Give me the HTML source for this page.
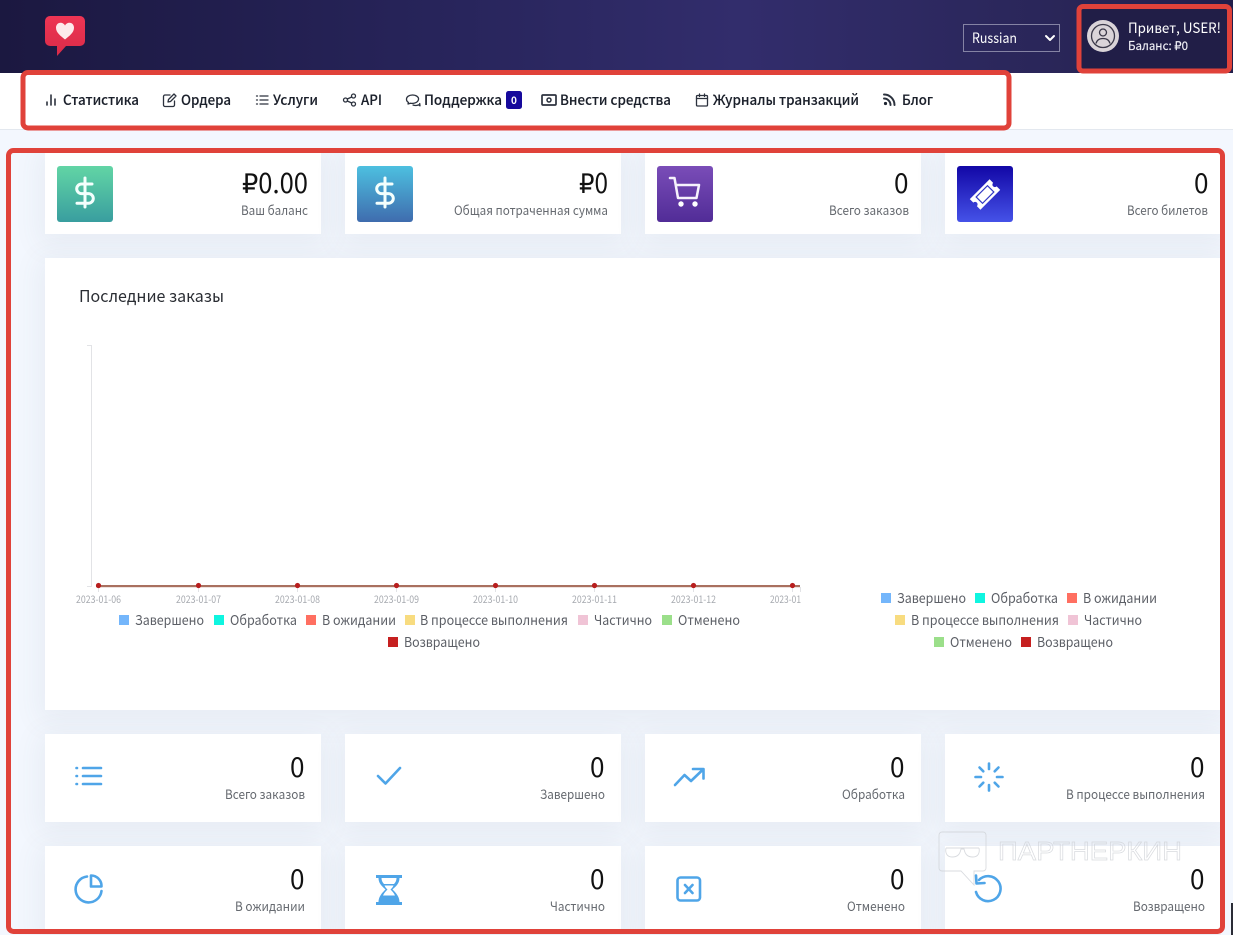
<!DOCTYPE html>
<html lang="ru">
<head>
<meta charset="utf-8">
<title>Панель</title>
<style>
html,body{margin:0;padding:0;width:1233px;height:935px;overflow:hidden;background:#f3f7fe}
body{position:relative;font-family:"Liberation Sans","Noto Sans CJK JP",sans-serif}
.h{position:absolute;left:0;top:0;width:1233px;height:73px;background:linear-gradient(90deg,#1b1840 0%,#27245a 35%,#322d6c 60%,#2a2659 85%,#211e4b 100%)}
.n{position:absolute;left:0;top:73px;width:1233px;height:56px;background:#fff;border-bottom:1px solid #e3e8ef}
.c{position:absolute;background:#fff;box-shadow:0 6px 26px 6px rgba(70,90,100,.065)}
.clip{position:absolute;left:0;top:150px;width:1221px;height:785px;overflow:hidden}
svg{position:absolute;left:0;top:0}
text{font-family:"Noto Sans CJK JP","Noto Sans CJK SC",sans-serif}
.nav{font-size:14px;font-weight:500;fill:#1a1f2a;stroke:#1a1f2a;stroke-width:.12}
.ni{fill:none;stroke:#2c323e;stroke-width:1.300;stroke-linecap:round;stroke-linejoin:round}
.v{font-size:27px;fill:#111}
.l{font-size:13px;fill:#666a70}
.lg{font-size:13.5px;fill:#5c5f66}
.d{font-size:10px;fill:#a6a9af}
.bi{fill:none;stroke:#4fa5e8;stroke-width:2.600;stroke-linecap:round;stroke-linejoin:round}
</style>
</head>
<body>
<div class="h"></div>
<div class="n"></div>
<div class="clip">
<div class="c" style="left:45px;top:0;width:276px;height:84px"></div>
<div class="c" style="left:345px;top:0;width:276px;height:84px"></div>
<div class="c" style="left:645px;top:0;width:276px;height:84px"></div>
<div class="c" style="left:945px;top:0;width:276px;height:84px"></div>
<div class="c" style="left:45px;top:108px;width:1176px;height:452px"></div>
<div class="c" style="left:45px;top:584px;width:276px;height:88px"></div>
<div class="c" style="left:345px;top:584px;width:276px;height:88px"></div>
<div class="c" style="left:645px;top:584px;width:276px;height:88px"></div>
<div class="c" style="left:945px;top:584px;width:276px;height:88px"></div>
<div class="c" style="left:45px;top:696px;width:276px;height:88px"></div>
<div class="c" style="left:345px;top:696px;width:276px;height:88px"></div>
<div class="c" style="left:645px;top:696px;width:276px;height:88px"></div>
<div class="c" style="left:945px;top:696px;width:276px;height:88px"></div>
</div>
<svg width="1233" height="935" viewBox="0 0 1233 935">
<defs>
<linearGradient id="g1" x1="0" y1="0" x2="0" y2="1"><stop offset="0" stop-color="#62d5a5"/><stop offset="1" stop-color="#399e9f"/></linearGradient>
<linearGradient id="g2" x1="0" y1="0" x2="0" y2="1"><stop offset="0" stop-color="#4dc0e0"/><stop offset="1" stop-color="#3f6cae"/></linearGradient>
<linearGradient id="g3" x1="0" y1="0" x2="0" y2="1"><stop offset="0" stop-color="#7a4db8"/><stop offset="1" stop-color="#512c97"/></linearGradient>
<linearGradient id="g4" x1="0" y1="0" x2="0" y2="1"><stop offset="0" stop-color="#1207a6"/><stop offset="1" stop-color="#4552e8"/></linearGradient>
<linearGradient id="lg" x1="0" y1="0" x2="0" y2="1"><stop offset="0" stop-color="#ee3554"/><stop offset="1" stop-color="#d92b48"/></linearGradient>
</defs>

<!-- logo -->
<path d="M50 16H80a5 5 0 0 1 5 5V41a5 5 0 0 1-5 5H66L57 56V46H50a5 5 0 0 1-5-5V21a5 5 0 0 1 5-5Z" fill="url(#lg)"/>
<path d="M65 39.500C60.500 36 56 32.500 56 27.800C56 24.800 58 22.800 60.500 22.800C62.500 22.800 64 23.800 65 25.500C66 23.800 67.500 22.800 69.500 22.800C72 22.800 74 24.800 74 27.800C74 32.500 69.500 36 65 39.500Z" fill="#fdeaec"/>

<!-- language select -->
<rect x="963.500" y="24.500" width="96" height="27" fill="none" stroke="#8583a4"/>
<text x="972" y="43" font-size="14" fill="#fff" textLength="45" lengthAdjust="spacingAndGlyphs">Russian</text>
<path d="M1046 36L1050 40L1054 36" fill="none" stroke="#fff" stroke-width="2" stroke-linecap="round" stroke-linejoin="round"/>

<!-- user -->
<rect x="1079" y="7" width="150" height="64" fill="#211e47"/>
<circle cx="1103" cy="36" r="16" fill="#dad4d8"/>
<circle cx="1103" cy="36" r="11.500" fill="none" stroke="#3a3848" stroke-width="1.300"/>
<circle cx="1103" cy="32.500" r="3.500" fill="none" stroke="#3a3848" stroke-width="1.300"/>
<path d="M1096 43.500C1097 39.500 1100 38.500 1103 38.500C1106 38.500 1109 39.500 1110 43.500" fill="none" stroke="#3a3848" stroke-width="1.300"/>
<text x="1128" y="33" font-size="14" fill="#fff" textLength="93" lengthAdjust="spacingAndGlyphs">Привет, USER!</text>
<text x="1128" y="50" font-size="12" fill="#f0f0f6" stroke="#f0f0f6" stroke-width=".15" textLength="60" lengthAdjust="spacingAndGlyphs">Баланс: ₽0</text>

<!-- nav icons -->
<g class="ni">
<path d="M47 105V102M51 105V95M55 105V99" stroke-width="1.600"/>
<path d="M170 95H165a1.500 1.500 0 0 0-1.500 1.500V105a1.500 1.500 0 0 0 1.500 1.500H173a1.500 1.500 0 0 0 1.500-1.500V101M168 102L168.500 99.500L174 94L176 96L170.500 101.500Z"/>
<path d="M260 96H268M260 100H268M260 104H268M256.500 96H257.500M256.500 100H257.500M256.500 104H257.500"/>
<circle cx="345.500" cy="100" r="2"/><circle cx="353.500" cy="96" r="2"/><circle cx="353.500" cy="104" r="2"/><path d="M347.300 99L351.700 97M347.300 101L351.700 103"/>
<path d="M412.500 95C409 95 406.500 96.800 406.500 99.200C406.500 100.700 407.300 101.700 408.500 102.400L408 104L410.500 103.200C413.500 103.800 417.800 102.800 418.500 99.500C419 97 416 95 412.500 95Z"/>
<path d="M413 105C415 105.800 417.500 105.500 418.500 104.800L420 105.800L419.700 103.500"/>
<rect x="542" y="95" width="14" height="10" rx="1" stroke-width="1.700"/><circle cx="549" cy="100" r="2" stroke-width="1.500"/>
<rect x="696.500" y="95.500" width="11" height="10.500" rx="1"/><path d="M696.500 98.500H707.500M699.500 94V96.500M704.500 94V96.500"/>
<path d="M884 94.500A10.500 10.500 0 0 1 894.500 105M884 98.500A6.500 6.500 0 0 1 890.500 105" stroke-width="2"/>
</g>
<circle cx="885.500" cy="103.500" r="1.600" fill="#1d2430"/>

<!-- nav labels -->
<g class="nav">
<text x="63" y="105" textLength="76" lengthAdjust="spacingAndGlyphs">Статистика</text>
<text x="181" y="105" textLength="50" lengthAdjust="spacingAndGlyphs">Ордера</text>
<text x="273" y="105" textLength="45" lengthAdjust="spacingAndGlyphs">Услуги</text>
<text x="361" y="105" textLength="21" lengthAdjust="spacingAndGlyphs">API</text>
<text x="424" y="105" textLength="78" lengthAdjust="spacingAndGlyphs">Поддержка</text>
<text x="560" y="105" textLength="111" lengthAdjust="spacingAndGlyphs">Внести средства</text>
<text x="713" y="105" textLength="146" lengthAdjust="spacingAndGlyphs">Журналы транзакций</text>
<text x="902" y="105" textLength="31" lengthAdjust="spacingAndGlyphs">Блог</text>
</g>
<rect x="506" y="91" width="16" height="18" rx="2.500" fill="#16099c"/>
<text x="511" y="104" font-size="10" font-weight="700" fill="#fff">0</text>

<!-- top cards -->
<rect x="57" y="166" width="56" height="56" rx="3" fill="url(#g1)"/>
<rect x="357" y="166" width="56" height="56" rx="3" fill="url(#g2)"/>
<rect x="657" y="166" width="56" height="56" rx="3" fill="url(#g3)"/>
<rect x="957" y="166" width="56" height="56" rx="3" fill="url(#g4)"/>
<g fill="none" stroke="#f4fffd" stroke-width="3" stroke-linecap="round" stroke-linejoin="round">
<path d="M85 178V207M92 184H81.500a4.800 4.800 0 0 0 0 9.600H88.500a4.800 4.800 0 0 1 0 9.600H77"/>
<path d="M385 178V207M392 184H381.500a4.800 4.800 0 0 0 0 9.600H388.500a4.800 4.800 0 0 1 0 9.600H377"/>
</g>
<path d="M670 178H674.500L678 198H696.500L699 185H676" fill="none" stroke="#f6f2fc" stroke-width="2.500" stroke-linecap="round" stroke-linejoin="round"/>
<circle cx="681" cy="204" r="2.700" fill="#fff"/><circle cx="695" cy="204" r="2.700" fill="#fff"/>
<g transform="rotate(-45 985 194.500)">
<path d="M971 187H999V192a2.500 2.500 0 0 0 0 5V202H971V197a2.500 2.500 0 0 0 0-5Z" fill="#fff"/>
<rect x="977" y="190" width="16" height="9" fill="none" stroke="#3138c4" stroke-width="1.200"/>
</g>

<text class="v" x="242" y="193" textLength="66" lengthAdjust="spacingAndGlyphs">₽0.00</text>
<text class="l" x="241" y="215" textLength="67" lengthAdjust="spacingAndGlyphs">Ваш баланс</text>
<text class="v" x="579" y="193" textLength="29" lengthAdjust="spacingAndGlyphs">₽0</text>
<text class="l" x="454" y="215" textLength="154" lengthAdjust="spacingAndGlyphs">Общая потраченная сумма</text>
<text class="v" x="894" y="193" textLength="14.500" lengthAdjust="spacingAndGlyphs">0</text>
<text class="l" x="829" y="215" textLength="80" lengthAdjust="spacingAndGlyphs">Всего заказов</text>
<text class="v" x="1194" y="193" textLength="14.500" lengthAdjust="spacingAndGlyphs">0</text>
<text class="l" x="1127" y="215" textLength="81" lengthAdjust="spacingAndGlyphs">Всего билетов</text>

<!-- chart -->
<text x="79" y="302" font-size="16.500" fill="#2a2d33" textLength="145" lengthAdjust="spacingAndGlyphs">Последние заказы</text>
<path d="M91.500 345V587M87 345.500H91.500M87 586.500H91.500" stroke="#e2e3e6" fill="none"/>
<path d="M98.500 587V592M198.500 587V592M297.500 587V592M396.500 587V592M495.500 587V592M594.500 587V592M693.500 587V592M792.500 587V592M800.500 587V592" stroke="#e2e3e6" fill="none"/>
<rect x="96" y="585" width="704" height="2.200" fill="#a9705f"/>
<g fill="#b81e1e">
<circle cx="98.500" cy="585.500" r="2.600"/><circle cx="198.500" cy="585.500" r="2.600"/><circle cx="297.500" cy="585.500" r="2.600"/><circle cx="396.500" cy="585.500" r="2.600"/><circle cx="495.500" cy="585.500" r="2.600"/><circle cx="594.500" cy="585.500" r="2.600"/><circle cx="693.500" cy="585.500" r="2.600"/><circle cx="792.500" cy="585.500" r="2.600"/>
</g>
<g class="d">
<text x="76" y="603" textLength="45" lengthAdjust="spacingAndGlyphs">2023-01-06</text>
<text x="176" y="603" textLength="45" lengthAdjust="spacingAndGlyphs">2023-01-07</text>
<text x="275" y="603" textLength="45" lengthAdjust="spacingAndGlyphs">2023-01-08</text>
<text x="374" y="603" textLength="45" lengthAdjust="spacingAndGlyphs">2023-01-09</text>
<text x="473" y="603" textLength="45" lengthAdjust="spacingAndGlyphs">2023-01-10</text>
<text x="572" y="603" textLength="45" lengthAdjust="spacingAndGlyphs">2023-01-11</text>
<text x="671" y="603" textLength="45" lengthAdjust="spacingAndGlyphs">2023-01-12</text>
<text x="770" y="603" textLength="31" lengthAdjust="spacingAndGlyphs">2023-01</text>
</g>

<!-- legend 1 -->
<rect x="119" y="615" width="10" height="10" fill="#74b6fb"/>
<rect x="214" y="615" width="10" height="10" fill="#0ff5e0"/>
<rect x="306" y="615" width="10" height="10" fill="#ff6f61"/>
<rect x="405" y="615" width="10" height="10" fill="#f8dc80"/>
<rect x="578" y="615" width="10" height="10" fill="#f0c4d6"/>
<rect x="662" y="615" width="10" height="10" fill="#9bdf8a"/>
<rect x="388" y="637" width="10" height="10" fill="#c62020"/>
<g class="lg">
<text x="135" y="625" textLength="69" lengthAdjust="spacingAndGlyphs">Завершено</text>
<text x="230" y="625" textLength="67" lengthAdjust="spacingAndGlyphs">Обработка</text>
<text x="322" y="625" textLength="74" lengthAdjust="spacingAndGlyphs">В ожидании</text>
<text x="420" y="625" textLength="148" lengthAdjust="spacingAndGlyphs">В процессе выполнения</text>
<text x="594" y="625" textLength="58" lengthAdjust="spacingAndGlyphs">Частично</text>
<text x="678" y="625" textLength="62" lengthAdjust="spacingAndGlyphs">Отменено</text>
<text x="404" y="647" textLength="76" lengthAdjust="spacingAndGlyphs">Возвращено</text>
</g>

<!-- legend 2 -->
<rect x="881" y="593" width="10" height="10" fill="#74b6fb"/>
<rect x="975" y="593" width="10" height="10" fill="#0ff5e0"/>
<rect x="1067" y="593" width="10" height="10" fill="#ff6f61"/>
<rect x="895" y="615" width="10" height="10" fill="#f8dc80"/>
<rect x="1068" y="615" width="10" height="10" fill="#f0c4d6"/>
<rect x="934" y="637" width="10" height="10" fill="#9bdf8a"/>
<rect x="1021" y="637" width="10" height="10" fill="#c62020"/>
<g class="lg">
<text x="897" y="603" textLength="69" lengthAdjust="spacingAndGlyphs">Завершено</text>
<text x="991" y="603" textLength="67" lengthAdjust="spacingAndGlyphs">Обработка</text>
<text x="1083" y="603" textLength="74" lengthAdjust="spacingAndGlyphs">В ожидании</text>
<text x="911" y="625" textLength="148" lengthAdjust="spacingAndGlyphs">В процессе выполнения</text>
<text x="1084" y="625" textLength="58" lengthAdjust="spacingAndGlyphs">Частично</text>
<text x="950" y="647" textLength="62" lengthAdjust="spacingAndGlyphs">Отменено</text>
<text x="1037" y="647" textLength="76" lengthAdjust="spacingAndGlyphs">Возвращено</text>
</g>

<!-- stat values -->
<text class="v" x="290" y="777" textLength="14.500" lengthAdjust="spacingAndGlyphs">0</text>
<text class="l" x="225" y="799" textLength="80" lengthAdjust="spacingAndGlyphs">Всего заказов</text>
<text class="v" x="590" y="777" textLength="14.500" lengthAdjust="spacingAndGlyphs">0</text>
<text class="l" x="540" y="799" textLength="65" lengthAdjust="spacingAndGlyphs">Завершено</text>
<text class="v" x="890" y="777" textLength="14.500" lengthAdjust="spacingAndGlyphs">0</text>
<text class="l" x="842" y="799" textLength="63" lengthAdjust="spacingAndGlyphs">Обработка</text>
<text class="v" x="1190" y="777" textLength="14.500" lengthAdjust="spacingAndGlyphs">0</text>
<text class="l" x="1066" y="799" textLength="139" lengthAdjust="spacingAndGlyphs">В процессе выполнения</text>
<text class="v" x="290" y="889" textLength="14.500" lengthAdjust="spacingAndGlyphs">0</text>
<text class="l" x="235" y="911" textLength="70" lengthAdjust="spacingAndGlyphs">В ожидании</text>
<text class="v" x="590" y="889" textLength="14.500" lengthAdjust="spacingAndGlyphs">0</text>
<text class="l" x="550" y="911" textLength="55" lengthAdjust="spacingAndGlyphs">Частично</text>
<text class="v" x="890" y="889" textLength="14.500" lengthAdjust="spacingAndGlyphs">0</text>
<text class="l" x="847" y="911" textLength="58" lengthAdjust="spacingAndGlyphs">Отменено</text>
<text class="v" x="1190" y="889" textLength="14.500" lengthAdjust="spacingAndGlyphs">0</text>
<text class="l" x="1133" y="911" textLength="72" lengthAdjust="spacingAndGlyphs">Возвращено</text>

<!-- stat icons -->
<g class="bi">
<path d="M83 768H101M83 776H101M83 784H101"/>
<path d="M76.500 768H77M76.500 776H77M76.500 784H77"/>
<path d="M378 776L385.500 783.500L400 768"/>
<path d="M675 785L684.500 775L691 781L703 769.500M693 769H703.500V778.500"/>
<path d="M989 763.500V769M989 785V790.500M975.500 777H981M997 777H1002.500M979.500 767.500L983.300 771.300M994.700 782.700L998.500 786.500M979.500 786.500L983.300 782.700M994.700 771.300L998.500 767.500"/>
<path d="M87 876.500A13 13 0 1 0 101.500 891"/>
<path d="M91 875.500A10.500 10.500 0 0 1 101.500 886.500H91Z"/>
<rect x="677.500" y="877.500" width="22.500" height="23" rx="3"/>
<path d="M685 885L692.500 893M692.500 885L685 893"/>
<path d="M979 880A12.500 12.500 0 1 1 976 892"/>
<path d="M976 875.500L976.500 883.500L984.500 883"/>
</g>
<path d="M376 875H402V878H399.500C399.500 884 395 887 392.500 889.500C395 892 399.500 896 399.500 902H402V905H376V902H378.500C378.500 896 383 892 385.500 889.500C383 887 378.500 884 378.500 878H376Z" fill="#4fa5e8"/>
<path d="M381.500 878H396.500C396.500 880.500 395.500 882.500 394 884H384C382.500 882.500 381.500 880.500 381.500 878Z" fill="#fff"/>
<path d="M387.500 889.500C386 888 385 887 384.500 885.500H393.500C393 887 392 888 390.500 889.500C392 891 394 893 395 895.500H383C384 893 386 891 387.500 889.500Z" fill="#fff"/>

<!-- watermark -->
<g fill="none" stroke="#d0d3d8" stroke-width=".9" opacity=".8">
<path d="M942 832H983a3 3 0 0 1 3 3V868a3 3 0 0 1-3 3H974V885L961 871H942a3 3 0 0 1-3-3V835a3 3 0 0 1 3-3Z"/>
<path d="M946 848H979M946 848C945 853 947 857 952 857C958 857 960 854 961 849H964C965 854 967 857 973 857C978 857 980 853 979 848"/>
</g>
<text x="998" y="860" font-size="26" fill="none" stroke="#cfd2d7" stroke-width=".7" opacity=".8" style="font-family:'Liberation Sans',sans-serif" textLength="184" lengthAdjust="spacingAndGlyphs">ПАРТНЕРКИН</text>

<!-- dark sliver -->
<rect x="1231" y="903" width="2" height="32" fill="#2a2c36"/>

<!-- red annotation boxes -->
<g fill="none" stroke="#e0423a" stroke-width="5">
<rect x="23" y="72.500" width="986" height="55.500" rx="5"/>
<rect x="1079" y="6.500" width="150.500" height="64.500" rx="4"/>
<rect x="8.500" y="150.500" width="1214" height="781" rx="5"/>
</g>
</svg>
</body>
</html>
